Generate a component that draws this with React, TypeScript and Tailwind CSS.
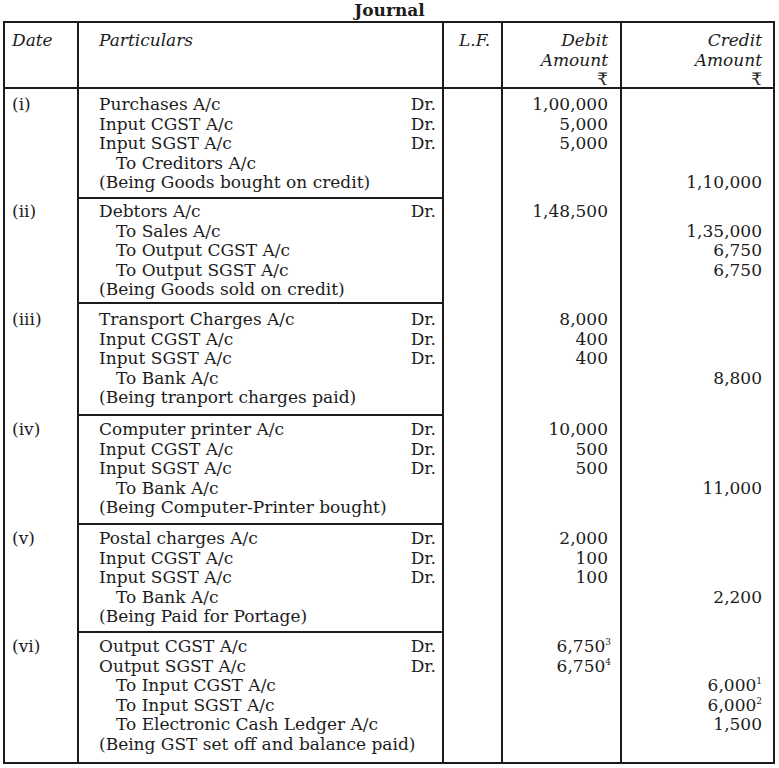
import React from "react";

type Line = {
  text: string;
  to?: boolean;
  dr?: boolean;
  debit?: string;
  debitSup?: string;
  credit?: string;
  creditSup?: string;
};

type Entry = { date: string; rowH: string; pt: string; lines: Line[] };

const entries: Entry[] = [
  {
    date: "(i)",
    rowH: "h-[110px]",
    pt: "pt-[6px]",
    lines: [
      { text: "Purchases A/c", dr: true, debit: "1,00,000" },
      { text: "Input CGST A/c", dr: true, debit: "5,000" },
      { text: "Input SGST A/c", dr: true, debit: "5,000" },
      { text: "To Creditors A/c", to: true },
      { text: "(Being Goods bought on credit)", credit: "1,10,000" },
    ],
  },
  {
    date: "(ii)",
    rowH: "h-[105px]",
    pt: "pt-[3px]",
    lines: [
      { text: "Debtors A/c", dr: true, debit: "1,48,500" },
      { text: "To Sales A/c", to: true, credit: "1,35,000" },
      { text: "To Output CGST A/c", to: true, credit: "6,750" },
      { text: "To Output SGST A/c", to: true, credit: "6,750" },
      { text: "(Being Goods sold on credit)" },
    ],
  },
  {
    date: "(iii)",
    rowH: "h-[112px]",
    pt: "pt-[6px]",
    lines: [
      { text: "Transport Charges A/c", dr: true, debit: "8,000" },
      { text: "Input CGST A/c", dr: true, debit: "400" },
      { text: "Input SGST A/c", dr: true, debit: "400" },
      { text: "To Bank A/c", to: true, credit: "8,800" },
      { text: "(Being tranport charges paid)" },
    ],
  },
  {
    date: "(iv)",
    rowH: "h-[109px]",
    pt: "pt-[4px]",
    lines: [
      { text: "Computer printer A/c", dr: true, debit: "10,000" },
      { text: "Input CGST A/c", dr: true, debit: "500" },
      { text: "Input SGST A/c", dr: true, debit: "500" },
      { text: "To Bank A/c", to: true, credit: "11,000" },
      { text: "(Being Computer-Printer bought)" },
    ],
  },
  {
    date: "(v)",
    rowH: "h-[108px]",
    pt: "pt-[4px]",
    lines: [
      { text: "Postal charges A/c", dr: true, debit: "2,000" },
      { text: "Input CGST A/c", dr: true, debit: "100" },
      { text: "Input SGST A/c", dr: true, debit: "100" },
      { text: "To Bank A/c", to: true, credit: "2,200" },
      { text: "(Being Paid for Portage)" },
    ],
  },
  {
    date: "(vi)",
    rowH: "h-[129px]",
    pt: "pt-[4px]",
    lines: [
      { text: "Output CGST A/c", dr: true, debit: "6,750", debitSup: "3" },
      { text: "Output SGST A/c", dr: true, debit: "6,750", debitSup: "4" },
      { text: "To Input CGST A/c", to: true, credit: "6,000", creditSup: "1" },
      { text: "To Input SGST A/c", to: true, credit: "6,000", creditSup: "2" },
      { text: "To Electronic Cash Ledger A/c", to: true, credit: "1,500" },
      { text: "(Being GST set off and balance paid)" },
    ],
  },
];

function Amount({ value, sup, hang }: { value?: string; sup?: string; hang?: boolean }) {
  return (
    <div className="h-[19.6px]">
      {value}
      {sup && (
        <sup className={`text-[9px] relative -top-[7px] ${hang ? "-mr-[3px]" : ""}`}>{sup}</sup>
      )}
    </div>
  );
}

export default function App() {
  return (
    <div
      className="bg-white text-[#1c1c1c] w-[779px] h-[768px] overflow-hidden"
      style={{ fontFamily: '"DejaVu Serif", "Liberation Serif", serif' }}
    >
      <h1 className="text-center font-bold text-[17px] leading-[21px]">Journal</h1>
      <div className="ml-[3px] w-[772px] border-2 border-[#1c1c1c] text-[17px] leading-[19.6px]">
        {/* header */}
        <div className="grid grid-cols-[74px_365px_59px_119px_151px] italic h-[66px] border-b-2 border-[#1c1c1c]">
          <div className="border-r-2 border-[#1c1c1c] pl-[7px] pt-[8px]">Date</div>
          <div className="border-r-2 border-[#1c1c1c] pl-[20px] pt-[8px]">Particulars</div>
          <div className="border-r-2 border-[#1c1c1c] pl-[15px] pt-[8px]">L.F.</div>
          <div className="border-r-2 border-[#1c1c1c] pr-[12px] pt-[8px] text-right">
            <div>Debit</div>
            <div>Amount</div>
            <div className="not-italic">₹</div>
          </div>
          <div className="pr-[11px] pt-[8px] text-right">
            <div>Credit</div>
            <div>Amount</div>
            <div className="not-italic">₹</div>
          </div>
        </div>
        {/* entries */}
        {entries.map((e, i) => {
          const last = i === entries.length - 1;
          return (
            <div key={e.date} className={`grid grid-cols-[74px_365px_59px_119px_151px] ${e.rowH}`}>
              <div className={`border-r-2 border-[#1c1c1c] pl-[7px] ${e.pt}`}>{e.date}</div>
              <div className={`border-r-2 border-[#1c1c1c] pl-[20px] pr-[6px] ${e.pt} ${last ? "" : "border-b-2"}`}>
                {e.lines.map((l, j) => (
                  <div key={j} className="flex justify-between h-[19.6px]">
                    <span className={l.to ? "pl-[17px]" : ""}>{l.text}</span>
                    {l.dr && <span>Dr.</span>}
                  </div>
                ))}
              </div>
              <div className="border-r-2 border-[#1c1c1c]" />
              <div className={`border-r-2 border-[#1c1c1c] pr-[12px] ${e.pt} text-right`}>
                {e.lines.map((l, j) => (
                  <Amount key={j} value={l.debit} sup={l.debitSup} hang />
                ))}
              </div>
              <div className={`pr-[11px] ${e.pt} text-right`}>
                {e.lines.map((l, j) => (
                  <Amount key={j} value={l.credit} sup={l.creditSup} />
                ))}
              </div>
            </div>
          );
        })}
      </div>
    </div>
  );
}
